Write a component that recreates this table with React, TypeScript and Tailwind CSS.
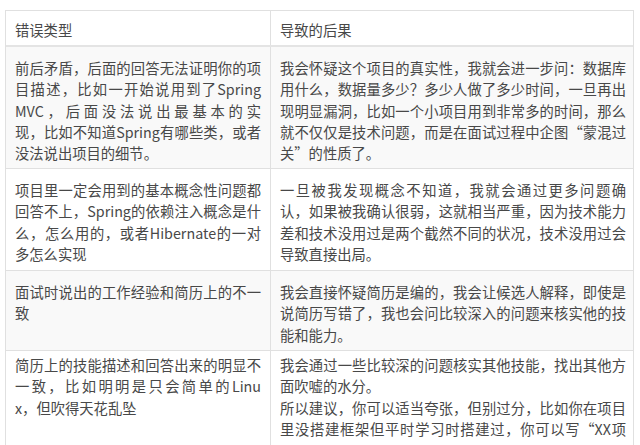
import React from "react";

type Cell = { lines: string[]; ends: number[] };

// ends: indices of lines that end a paragraph (not justified)
const rows: { left: Cell; right: Cell; h: string; pt: string; bg: string }[] = [
  {
    left: {
      lines: [
        "前后矛盾，后面的回答无法证明你的项",
        "目描述，比如一开始说用到了Spring",
        "MVC，后面没法说出最基本的实",
        "现，比如不知道Spring有哪些类，或者",
        "没法说出项目的细节。",
      ],
      ends: [4],
    },
    right: {
      lines: [
        "我会怀疑这个项目的真实性，我就会进一步问：数据库",
        "用什么，数据量多少？多少人做了多少时间，一旦再出",
        "现明显漏洞，比如一个小项目用到非常多的时间，那么",
        "就不仅仅是技术问题，而是在面试过程中企图“蒙混过",
        "关”的性质了。",
      ],
      ends: [4],
    },
    h: "h-[122px]",
    pt: "pt-[10px]",
    bg: "bg-[#f9f9f9]",
  },
  {
    left: {
      lines: [
        "项目里一定会用到的基本概念性问题都",
        "回答不上，Spring的依赖注入概念是什",
        "么，怎么用的，或者Hibernate的一对",
        "多怎么实现",
      ],
      ends: [3],
    },
    right: {
      lines: [
        "一旦被我发现概念不知道，我就会通过更多问题确",
        "认，如果被我确认很弱，这就相当严重，因为技术能力",
        "差和技术没用过是两个截然不同的状况，技术没用过会",
        "导致直接出局。",
      ],
      ends: [3],
    },
    h: "h-[102px]",
    pt: "pt-[10px]",
    bg: "bg-white",
  },
  {
    left: {
      lines: ["面试时说出的工作经验和简历上的不一", "致"],
      ends: [1],
    },
    right: {
      lines: [
        "我会直接怀疑简历是编的，我会让候选人解释，即使是",
        "说简历写错了，我也会问比较深入的问题来核实他的技",
        "能和能力。",
      ],
      ends: [2],
    },
    h: "h-[80px]",
    pt: "pt-[10px]",
    bg: "bg-[#f9f9f9]",
  },
  {
    left: {
      lines: [
        "简历上的技能描述和回答出来的明显不",
        "一致，比如明明是只会简单的Linu",
        "x，但吹得天花乱坠",
      ],
      ends: [2],
    },
    right: {
      lines: [
        "我会通过一些比较深的问题核实其他技能，找出其他方",
        "面吹嘘的水分。",
        "所以建议，你可以适当夸张，但别过分，比如你在项目",
        "里没搭建框架但平时学习时搭建过，你可以写“XX项",
      ],
      ends: [1],
    },
    h: "h-[110px]",
    pt: "pt-[3px]",
    bg: "bg-white",
  },
];

const Lines = ({ cell }: { cell: Cell }) => (
  <>
    {cell.lines.map((line, i) => (
      <div
        key={i}
        className={
          cell.ends.includes(i)
            ? "text-left"
            : "text-justify [text-align-last:justify]"
        }
      >
        {line}
      </div>
    ))}
  </>
);

export default function App() {
  return (
    <div
      className="w-[640px] h-[445px] overflow-hidden bg-white pt-[10px] pl-[5px] text-[#484848] text-[14.3px] leading-[21.3px]"
      style={{ fontFamily: '"Noto Sans CJK SC", "Noto Sans", sans-serif' }}
    >
      <div className="w-[629px] border-t border-l border-r border-[#e0e0e0]">
        <div className="grid grid-cols-[265px_363px] h-[36px] border-b-2 border-[#e4e4e4] bg-white">
          <div className="border-r border-[#e0e0e0] pl-[9px] pt-[8px]">错误类型</div>
          <div className="pl-[9px] pt-[8px]">导致的后果</div>
        </div>
        {rows.map((r, i) => (
          <div
            key={i}
            className={`grid grid-cols-[265px_363px] ${r.h} ${r.bg} border-b border-[#e0e0e0]`}
          >
            <div className={`border-r border-[#e0e0e0] pl-[9px] pr-[9px] ${r.pt} overflow-hidden`}>
              <Lines cell={r.left} />
            </div>
            <div className={`pl-[9px] pr-[8px] ${r.pt} overflow-hidden`}>
              <Lines cell={r.right} />
            </div>
          </div>
        ))}
      </div>
    </div>
  );
}
